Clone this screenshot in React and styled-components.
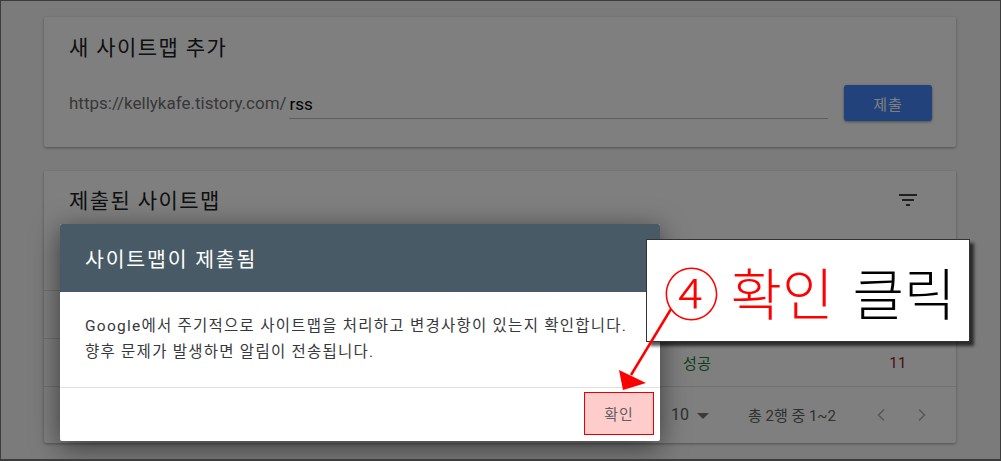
import React from 'react';
import styled, { createGlobalStyle } from 'styled-components';

const GlobalStyle = createGlobalStyle`
  html, body {
    margin: 0;
    padding: 0;
    background: #7b7b7b;
  }
  * {
    box-sizing: border-box;
  }
`;

const font = `"Roboto", "Noto Sans CJK KR", sans-serif`;

const Frame = styled.div`
  position: relative;
  width: 1001px;
  height: 461px;
  overflow: hidden;
  border: 1px solid #3c3c3c;
  border-bottom-width: 2px;
  background: #f6f6f6;
  font-family: ${font};
`;

const Page = styled.div`
  display: flex;
  flex-direction: column;
  gap: 24px;
  padding: 16px 44px 0 43px;
`;

const Card = styled.div`
  background: #fff;
  border-radius: 2px;
  box-shadow: 0 1px 3px rgba(0, 0, 0, 0.35);
  height: ${p => p.h}px;
`;

const CardTitle = styled.div`
  font-size: 21px;
  line-height: 26px;
  letter-spacing: 1.4px;
  color: #202124;
`;

const AddCard = styled(Card)`
  padding: 18px 24px 0 25px;
`;

const UrlRow = styled.div`
  display: flex;
  align-items: center;
  margin-top: 24px;
  height: 36px;
`;

const Prefix = styled.span`
  font-size: 17px;
  color: #6f6f6f;
  margin-right: 2px;
`;

const Input = styled.div`
  flex: 1;
  height: 32px;
  display: flex;
  align-items: flex-end;
  padding: 0 0 4px 1px;
  border-bottom: 1px solid #bdbdbd;
  font-size: 17px;
  color: #000;
  margin-right: 16px;
`;

const SubmitButton = styled.button`
  width: 88px;
  height: 36px;
  border: none;
  border-radius: 3px;
  background: #4285f4;
  color: #fff;
  font-family: ${font};
  font-size: 15px;
  letter-spacing: 1px;
  box-shadow: 0 1px 3px rgba(0, 0, 0, 0.4);
`;

const TitleBar = styled.div`
  display: flex;
  justify-content: space-between;
  align-items: flex-start;
  height: 72px;
  padding: 17px 36px 0 25px;
`;

const IconBox = styled.div`
  width: 24px;
  height: 24px;
  display: flex;
  align-items: center;
  justify-content: center;
  color: ${p => p.color || '#3c4043'};
`;

const Row = styled.div`
  display: grid;
  grid-template-columns: 250px 100px 130px 134px 120px 104px;
  align-items: center;
  height: 48px;
  padding: 0 49px 0 25px;
  border-bottom: 1px solid #e0e0e0;
  font-size: ${p => (p.head ? 13 : 15)}px;
  letter-spacing: 0.5px;
  color: ${p => (p.head ? '#5f6368' : '#202124')};
`;

const Cell = styled.div`
  text-align: ${p => (p.right ? 'right' : 'left')};
  color: ${p => p.color || 'inherit'};
`;

const Pager = styled.div`
  display: flex;
  justify-content: flex-end;
  align-items: center;
  height: 55px;
  padding-right: 22px;
  font-size: 15px;
  color: #616161;
`;

const PerPage = styled.span`
  font-size: 16px;
  margin-right: 2px;
`;

const RangeText = styled.span`
  margin: 0 33px 0 33px;
`;

const Nav = styled.div`
  display: flex;
  gap: 17px;
`;

const Dim = styled.div`
  position: absolute;
  inset: 0;
  background: rgba(0, 0, 0, 0.5);
`;

const Dialog = styled.div`
  position: absolute;
  left: 59px;
  top: 223px;
  width: 600px;
  height: 217px;
  background: #fff;
  border-radius: 2px;
  box-shadow: 0 6px 28px rgba(0, 0, 0, 0.55);
  display: flex;
  flex-direction: column;
`;

const DialogHead = styled.div`
  height: 68px;
  display: flex;
  align-items: center;
  padding: 0 25px;
  background: #475a65;
  border-radius: 2px 2px 0 0;
  color: #fff;
  font-size: 20.5px;
  letter-spacing: 1.8px;
`;

const DialogBody = styled.div`
  padding: 21px 25px 22px;
  font-size: 15.5px;
  line-height: 26px;
  letter-spacing: 1.25px;
  color: #37393c;
  border-bottom: 1px solid #e0e0e0;
`;

const DialogFoot = styled.div`
  flex: 1;
  display: flex;
  justify-content: flex-end;
  align-items: center;
  padding-right: 6px;
`;

const OkButton = styled.button`
  width: 70px;
  height: 43px;
  margin-top: -2px;
  background: #ffcccc;
  border: 1px solid #e60000;
  color: #616161;
  font-family: ${font};
  font-size: 15px;
  letter-spacing: 1px;
`;

const Callout = styled.div`
  position: absolute;
  left: 645px;
  top: 238px;
  width: 324px;
  height: 103px;
  padding-left: 3px;
  background: #fff;
  border: 1px solid #333;
  box-shadow: 4px 4px 3px rgba(0, 0, 0, 0.65);
  display: flex;
  align-items: center;
  justify-content: center;
  font-family: "Noto Sans CJK KR", sans-serif;
  font-weight: 300;
  font-size: 56px;
  line-height: 1;
  white-space: pre;
`;

const Mark = styled.span`
  color: ${p => p.color};
  margin-left: ${p => p.gap || 0}px;
`;

const ArrowLayer = styled.svg`
  position: absolute;
  left: -1px;
  top: -1px;
  pointer-events: none;
`;

function FilterIcon() {
  return (
    <svg width="24" height="24" viewBox="0 0 24 24" fill="currentColor">
      <path d="M10 18h4v-2h-4v2zM3 6v2h18V6H3zm3 7h12v-2H6v2z" />
    </svg>
  );
}

function Caret() {
  return (
    <svg width="24" height="24" viewBox="0 0 24 24" fill="#757575">
      <path d="M6 10l6 6 6-6z" />
    </svg>
  );
}

function Chevron({ dir }) {
  const pts = dir === 'left' ? '15,6.5 9.5,12 15,17.5' : '9,6.5 14.5,12 9,17.5';
  return (
    <svg width="24" height="24" viewBox="0 0 24 24" fill="none" stroke="#b0b0b0" strokeWidth="1.6">
      <polyline points={pts} />
    </svg>
  );
}

const rows = [
  { map: '/sitemap.xml', type: '사이트맵', sent: '2019. 5. 3.', read: '2019. 5. 3.', status: '성공', count: 11 },
  { map: '/rss', type: 'RSS', sent: '2019. 5. 3.', read: '2019. 5. 3.', status: '성공', count: 11 },
];

export default function App() {
  return (
    <>
      <GlobalStyle />
      <Frame>
        <Page>
          <AddCard h={130}>
            <CardTitle>새 사이트맵 추가</CardTitle>
            <UrlRow>
              <Prefix>https://kellykafe.tistory.com/</Prefix>
              <Input>rss</Input>
              <SubmitButton>제출</SubmitButton>
            </UrlRow>
          </AddCard>

          <Card h={272}>
            <TitleBar>
              <CardTitle>제출된 사이트맵</CardTitle>
              <IconBox>
                <FilterIcon />
              </IconBox>
            </TitleBar>
            <Row head>
              <Cell>사이트맵</Cell>
              <Cell>유형</Cell>
              <Cell>제출일</Cell>
              <Cell>마지막으로 읽은 날짜</Cell>
              <Cell>상태</Cell>
              <Cell right>발견된 URL</Cell>
            </Row>
            {rows.map(r => (
              <Row key={r.map}>
                <Cell>{r.map}</Cell>
                <Cell>{r.type}</Cell>
                <Cell>{r.sent}</Cell>
                <Cell>{r.read}</Cell>
                <Cell color="#188038">{r.status}</Cell>
                <Cell right color="#8a2020">{r.count}</Cell>
              </Row>
            ))}
            <Pager>
              <PerPage>10</PerPage>
              <Caret />
              <RangeText>총 2행 중 1~2</RangeText>
              <Nav>
                <Chevron dir="left" />
                <Chevron dir="right" />
              </Nav>
            </Pager>
          </Card>
        </Page>

        <Dim />

        <Dialog>
          <DialogHead>사이트맵이 제출됨</DialogHead>
          <DialogBody>
            Google에서 주기적으로 사이트맵을 처리하고 변경사항이 있는지 확인합니다.
            <br />
            향후 문제가 발생하면 알림이 전송됩니다.
          </DialogBody>
          <DialogFoot>
            <OkButton>확인</OkButton>
          </DialogFoot>
        </Dialog>

        <Callout>
          <Mark color="#ff0000">④</Mark>
          <Mark color="#ff0000" gap={11}>확인</Mark>
          <Mark color="#000" gap={19}>클릭</Mark>
        </Callout>

        <ArrowLayer width="1001" height="461" viewBox="0 0 1001 461">
          <line x1="671" y1="309" x2="631" y2="375" stroke="#ff0000" strokeWidth="2.5" />
          <polygon points="619,370 646,383 623,390" fill="#ff0000" />
        </ArrowLayer>
      </Frame>
    </>
  );
}
